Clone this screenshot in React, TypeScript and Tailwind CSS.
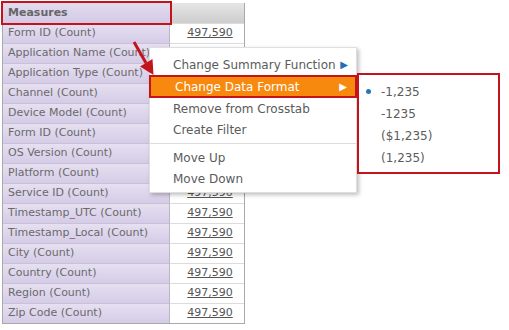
import React from "react";

const rows = [
  "Form ID (Count)",
  "Application Name (Count)",
  "Application Type (Count)",
  "Channel (Count)",
  "Device Model (Count)",
  "Form ID (Count)",
  "OS Version (Count)",
  "Platform (Count)",
  "Service ID (Count)",
  "Timestamp_UTC (Count)",
  "Timestamp_Local (Count)",
  "City (Count)",
  "Country (Count)",
  "Region (Count)",
  "Zip Code (Count)",
];

const formats = ["-1,235", "-1235", "($1,235)", "(1,235)"];

export default function App() {
  return (
    <div
      className="relative w-[509px] h-[330px] bg-white overflow-hidden text-[#555]"
      style={{ fontFamily: "Verdana, 'DejaVu Sans', sans-serif" }}
    >
      {/* crosstab */}
      <div className="absolute left-[2px] top-[3px] w-[243px] border-l border-b border-r border-[#a9a9a9] flex flex-col">
        <div className="flex h-[20px]">
          <div className="w-[167px] bg-gradient-to-b from-[#e3dcef] to-[#d3c9e6] text-[11px] font-bold text-[#666] flex items-center pl-[5px] outline-2 outline-[#c4141b] relative z-10">
            Measures
          </div>
          <div className="flex-1 bg-gradient-to-b from-[#e6e6e6] to-[#cdcdcd]" />
        </div>
        {rows.map((r, i) => (
          <div key={i} className="flex h-[20px]">
            <div className="w-[167px] bg-gradient-to-b from-[#e6e0f1] to-[#d5cbe7] border-t border-[#c9c2d6] border-r border-r-[#bdb5cc] text-[11px] flex items-center pl-[5px] text-[#6a6a6a]">
              {r}
            </div>
            <div className="flex-1 bg-white border-t border-[#dcdcdc] text-[11px] flex items-center justify-center pl-[6px] text-[#555] underline">
              497,590
            </div>
          </div>
        ))}
      </div>

      {/* context menu */}
      <div className="absolute left-[149px] top-[47px] w-[208px] h-[146px] bg-white border border-[#dedede] shadow-[2px_2px_4px_rgba(0,0,0,0.25)] text-[12px] text-[#5b5b5b] pt-[6px]">
        <div className="h-[21px] flex items-center pl-[23px] justify-between pr-[8px]">
          <span>Change Summary Function</span>
          <span className="text-[#1f6fb2] text-[10px]">▶</span>
        </div>
        <div className="h-[23px] -mx-[1px] flex items-center pl-[24px] justify-between pr-[8px] bg-[#f8890f] text-white border-2 border-[#c4141b]">
          <span>Change Data Format</span>
          <span className="text-[10px]">▶</span>
        </div>
        <div className="h-[21px] flex items-center pl-[23px]">Remove from Crosstab</div>
        <div className="h-[21px] flex items-center pl-[23px]">Create Filter</div>
        <div className="border-t border-[#dcdcdc] my-[3px]" />
        <div className="h-[21px] flex items-center pl-[23px]">Move Up</div>
        <div className="h-[21px] flex items-center pl-[23px]">Move Down</div>
      </div>

      {/* submenu */}
      <div className="absolute left-[357px] top-[73px] w-[143px] h-[101px] bg-white border-2 border-[#c4141b] text-[12px] text-[#5b5b5b] pt-[6px]">
        {formats.map((f, i) => (
          <div key={i} className="h-[22px] flex items-center pl-[22px] relative">
            {i === 0 && (
              <span className="absolute left-[7px] top-[8px] w-[5px] h-[5px] rounded-full bg-[#2479b5]" />
            )}
            {f}
          </div>
        ))}
      </div>

      {/* arrow */}
      <svg className="absolute left-[125px] top-[36px]" width="36" height="44" viewBox="0 0 36 44">
        <line x1="9" y1="6" x2="21" y2="27" stroke="#c4141b" strokeWidth="3" />
        <polygon points="28.5,39 15,30.5 27.5,23" fill="#c4141b" />
      </svg>
    </div>
  );
}
